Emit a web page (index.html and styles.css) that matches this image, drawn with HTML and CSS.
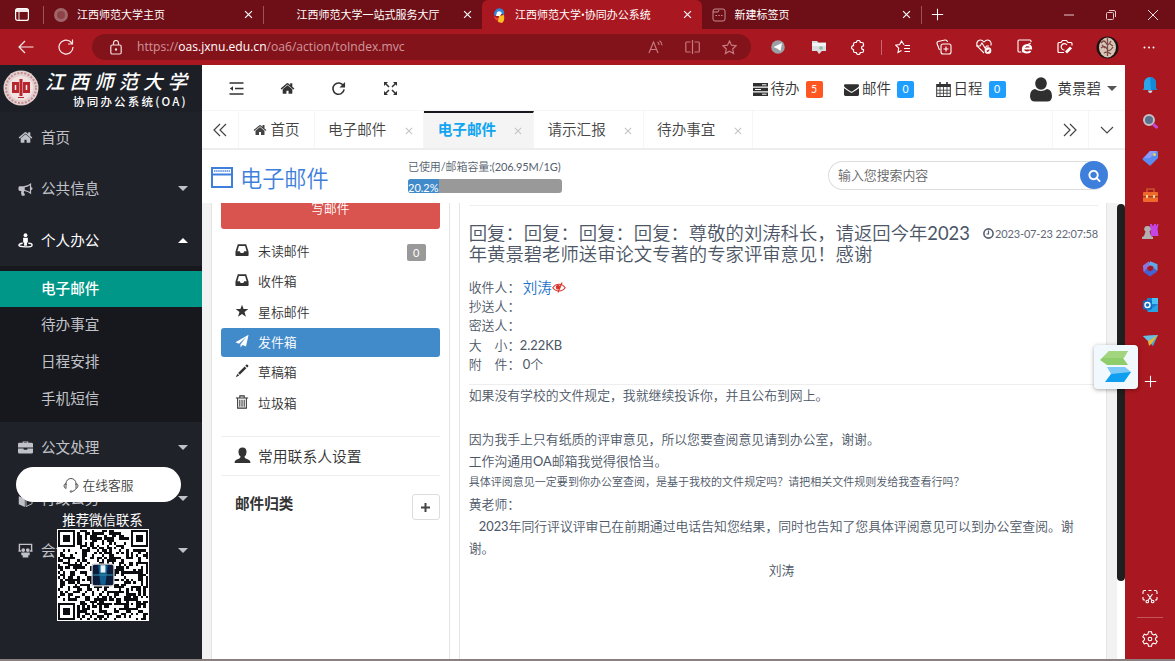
FILE: index.html
```html
<!DOCTYPE html>
<html lang="zh-CN">
<head>
<meta charset="utf-8">
<title>江西师范大学•协同办公系统</title>
<link rel="stylesheet" href="styles.css">
</head>
<body>
<svg class="sprite" aria-hidden="true">
  <symbol id="home" viewBox="0 0 1792 1792"><path d="M1472 992v480q0 26-19 45t-45 19h-384v-384h-256v384h-384q-26 0-45-19t-19-45v-480q0-1 .5-3t.5-3l575-474 575 474q1 2 1 6zm223-69l-62 74q-8 9-21 11h-3q-13 0-21-7l-692-577-692 577q-12 8-24 7-13-2-21-11l-62-74q-8-10-7-23.500t11-21.500l719-599q32-26 76-26t76 26l244 204v-195q0-14 9-23t23-9h192q14 0 23 9t9 23v408l219 182q10 8 11 21.500t-7 23.500z"/></symbol>
  <symbol id="repeat" viewBox="0 0 16 16"><path d="M13.300 5.200A6 6 0 1 0 14 9" fill="none" stroke="#333" stroke-width="1.700"/><path d="M15 1v6H9z"/></symbol>
  <symbol id="mail" viewBox="0 0 1792 1792"><path d="M1792 710v794q0 66-47 113t-113 47h-1472q-66 0-113-47t-47-113v-794q44 49 101 87 362 246 497 345 57 42 92.500 65.500t94.500 48 110 24.500h2q51 0 110-24.500t94.500-48 92.500-65.500q170-123 498-345 57-39 100-87zm0-294q0 79-49 151t-122 123q-376 261-468 325-10 7-42.500 30.500t-54 38-52 32.500-57.500 27-50 9h-2q-23 0-50-9t-57.500-27-52-32.500-54-38-42.500-30.500q-91-64-262-182.500t-205-142.500q-62-42-117-115.500t-55-136.500q0-78 41.500-130t118.500-52h1472q65 0 112.500 47t47.500 113z"/></symbol>
  <symbol id="search" viewBox="0 0 1792 1792"><path d="M1216 832q0-185-131.500-316.500t-316.500-131.500-316.500 131.500-131.500 316.500 131.500 316.500 316.500 131.500 316.500-131.500 131.500-316.500zm512 832q0 52-38 90t-90 38q-54 0-90-38l-343-342q-179 124-399 124-143 0-273.500-55.500t-225-150-150-225-55.500-273.500 55.500-273.500 150-225 225-150 273.500-55.500 273.500 55.500 225 150 150 225 55.500 273.500q0 220-124 399l343 343q37 37 37 90z"/></symbol>
  <symbol id="close" viewBox="0 0 16 16"><path d="M3 3l10 10M13 3L3 13" fill="none" stroke="currentColor" stroke-width="1.700"/></symbol>
  <symbol id="inbox" viewBox="0 0 16 16"><path fill-rule="evenodd" d="M3.200 1.500h9.600L15.500 10v4a.8.8 0 0 1-.8.8H1.300a.8.800 0 0 1-.8-.8v-4zM4.500 3.500L2.700 9.500h2.700l1.100 2h3l1.100-2h2.700l-1.800-6z"/></symbol>
  <symbol id="plus" viewBox="0 0 16 16"><path d="M8 1v14M1 8h14" fill="none" stroke="currentColor" stroke-width="1.300"/></symbol>
</svg>

<header class="tabstrip">
  <div class="strip-start"><svg width="14" height="13" viewBox="0 0 14 13"><rect x=".6" y=".6" width="12.800" height="11.800" rx="2" fill="none" stroke="#fff" stroke-width="1.200"/><path d="M1 1h12v3H4.500V12H3.500V4H1z" fill="#fff" opacity=".9"/></svg></div>
  <div class="btab sep-l"><svg class="fav" width="16" height="16" viewBox="0 0 16 16"><circle cx="8" cy="8" r="7" fill="#a0666a"/><circle cx="8" cy="8" r="4" fill="#8d4348"/></svg><span>江西师范大学主页</span><svg class="x"><use href="#close"/></svg></div>
  <div class="btab sep-l"><span class="no-icon">江西师范大学一站式服务大厅</span><svg class="x"><use href="#close"/></svg></div>
  <div class="btab current"><svg class="fav" width="15" height="16" viewBox="0 0 15 16"><path d="M3 4q2-4 7-2 3 2 2 6L8 6 3 9q-2-2 0-5z" fill="#2f86d8"/><path d="M5 5q3-2 5 1L8 9 4 9z" fill="#fff"/><path d="M2 8q1 3 5 3l1 3q-6 0-6-6z" fill="#e8433d"/><path d="M7 9l5-1q1 6-2 8l-4-1z" fill="#fdbe24"/></svg><span>江西师范大学<span class="dot">•</span>协同办公系统</span><svg class="x"><use href="#close"/></svg></div>
  <div class="btab"><svg class="fav" width="14" height="14" viewBox="0 0 14 14" fill="none" stroke="#c58b8f"><rect x="1" y="1" width="12" height="12" rx="2"/><path d="M1 4h5l1-2M3.500 7.500h1.500M6.300 7.500h1.500M9 7.500h1.500"/></svg><span class="newname">新建标签页</span><svg class="x"><use href="#close"/></svg></div>
  <div class="newtab sep-l"><svg width="13" height="13"><use href="#plus"/></svg></div>
  <div class="window-buttons">
    <span><svg width="10" height="10"><path d="M0 5h10" stroke="#e5c9cb"/></svg></span>
    <span><svg width="10" height="10" fill="none" stroke="#e5c9cb"><rect x=".5" y="2.500" width="7" height="7" rx="1"/><path d="M3 .5h5q1.500 0 1.500 1.500v5"/></svg></span>
    <span><svg width="10" height="10"><path d="M0 0l10 10M10 0L0 10" stroke="#f0dfe0"/></svg></span>
  </div>
</header>

<nav class="toolbar">
  <span class="tb-nav"><svg width="16" height="14" fill="none" stroke="#fbe9ea" stroke-width="1.200"><path d="M15.500 7H1M7 1L1 7l6 6"/></svg></span>
  <span class="tb-nav reload"><svg width="16" height="16" fill="none" stroke="#fbe9ea" stroke-width="1.200"><path d="M15 8A7 7 0 1 1 12.200 2.500L14.500 5M14.500.5V5H10"/></svg></span>
  <div class="address">
    <svg width="12" height="15" fill="none" stroke="#f4dcdd" stroke-width="1.200"><rect x=".8" y="5" width="10.400" height="9" rx="1.500"/><path d="M3.500 5V3a2.500 2.500 0 0 1 5 0v2"/><circle cx="6" cy="9.500" r=".6"/></svg>
    <span class="url">https://<b>oas.jxnu.edu.cn</b>/oa6/action/toIndex.mvc</span>
    <span class="addr-ic"><svg width="15" height="14" fill="none" stroke="#c5787d" stroke-width="1.200"><path d="M1 13L5.500 2 10 13M2.500 9.500h6M9.500 2q1.500 1 1.500 3M11.500.7q2.500 1.500 2.500 4.500"/></svg></span>
    <span class="addr-ic"><svg width="15" height="14" fill="none" stroke="#c5787d" stroke-width="1.200"><path d="M7.500 0v14M5.500 2H1.500Q.8 2 .8 3v8q0 1 .8 1h4M9.500 2h4q.8 0 .8 1v8q0 1-.8 1h-4"/></svg></span>
    <span class="addr-ic"><svg width="15" height="15" viewBox="0 0 15 15" fill="none" stroke="#c5787d" stroke-width="1.200"><path d="M7.500 1l2 4.200 4.600.6-3.400 3.200.9 4.600-4.100-2.300-4.100 2.300.9-4.600L.9 5.800l4.600-.6z"/></svg></span>
  </div>
  <div class="ext">
    <span><svg width="14" height="14"><circle cx="7" cy="7" r="6.800" fill="#9aa0a3"/><path d="M2.500 7L11 3 9.500 11 6.500 8.800z" fill="#fff"/></svg></span>
    <span><svg width="16" height="15"><path d="M1 1h5l1.500 1.500H15V11h-4l-3 3-2-3H1z" fill="#d9dde0"/><path d="M1 3h14v3H1z" fill="#f4f6f6"/><path d="M10 6v4M8 8h4" stroke="#7cae8a"/></svg></span>
    <span><svg width="15" height="15" fill="none" stroke="#fff" stroke-width="1.200"><path d="M4 2.500h1.300a2 2 0 0 1 4 0H11q1.500 0 1.500 1.500v1.800a1.900 1.900 0 0 0 0 3.800V11q0 1.500-1.500 1.500H9.300a2 2 0 0 1-4 0H4Q2.500 12.500 2.500 11V9.500a1.900 1.900 0 0 1 0-3.900V4Q2.500 2.500 4 2.500z"/></svg></span>
    <i></i>
    <span><svg width="16" height="14" fill="none" stroke="#fff" stroke-width="1.100"><path d="M9 4.800L6.500 1 4.700 4.600.8 5.200l2.900 2.900L3 12.400l3.500-1.900M9.500 5.500H15M9 8.500h6M9.500 11.500H15"/></svg></span>
    <span><svg width="16" height="16" fill="none" stroke="#fff" stroke-width="1.100"><rect x="5" y="5" width="10" height="10" rx="2"/><path d="M10 7.500v5M7.500 10h5M3.500 11L1 4.500Q.7 3 2 2.500L9 1q2-.3 2.500 2"/></svg></span>
    <span><svg width="16" height="16" fill="none" stroke="#fff" stroke-width="1.100"><path d="M8 14L2 8Q-.5 4.500 2 2q3-2.500 6 1 3-3.500 6-1 1.800 2 .8 4.500M0 7h4l2-3 3 5 1.500-2H13"/><circle cx="12" cy="11.500" r="2.800" fill="#fff"/><path d="M10.800 11.500l1 1 1.500-2" stroke="#a91720"/></svg></span>
    <span><svg width="16" height="16" fill="none" stroke="#fff" stroke-width="1.100"><path d="M4 13H2q-1 0-1-1V2q0-1 1-1h11q1 0 1 1v1"/><path d="M6.500 9.500H14Q14 6 10.500 6 6 6.500 6 10t4 3.500q2.500 0 3.500-1.500" stroke-width="2.200"/><path d="M5 13.500Q7 6 14 4" stroke-width="1"/></svg></span>
    <span><svg width="16" height="16" fill="none" stroke="#fff" stroke-width="1.200"><path d="M7 13.500H2q-1 0-1-1V4.500q0-1 1-1h2L5.500 1.500h4L11 3.500h3q1 0 1 1v2"/><path d="M10 6a3.200 3.200 0 1 0-2.500 5"/><path d="M9 13.500l5-5" stroke-width="2.800"/></svg></span>
    <span class="av"><svg width="23" height="23"><circle cx="11.500" cy="11.500" r="11" fill="#1c1213"/><ellipse cx="11.500" cy="11.500" rx="8.500" ry="10" fill="#d8c3b4"/><path d="M5 7q3-4 5 0t5-2M5 12q4-3 6 1t6-2M11.500 2v18M8 17q3-2 7 1M6 9l3 3M14 8l3 2" stroke="#7b4b48" fill="none" stroke-width="1.300"/></svg></span>
    <span><svg width="12" height="3" fill="#fff"><circle cx="1.500" cy="1.500" r="1"/><circle cx="6" cy="1.500" r="1"/><circle cx="10.500" cy="1.500" r="1"/></svg></span>
  </div>
</nav>

<div class="main">
  <aside class="side">
    <div class="brand">
      <svg width="36" height="36" viewBox="0 0 36 36"><circle cx="18" cy="18" r="17.500" fill="#e3d0d0"/><circle cx="18" cy="18" r="15" fill="none" stroke="#c48d8f" stroke-width="2" stroke-dasharray="2 1.500"/><circle cx="18" cy="18" r="12" fill="#f3e2e2"/><path d="M9 12h7v11H9zM20 12h7v11h-7zM16.500 9h3v17h-3z" fill="#b5262d"/><path d="M12.500 15v5M23.500 15v5" stroke="#f6ecec" stroke-width="1.500"/><path d="M15 27.500h6" stroke="#b5262d"/></svg>
      <div class="names"><div class="uni">江西师范大学</div><div class="sys">协同办公系统(OA)</div></div>
    </div>
    <div class="item"><svg class="ic"><use href="#home"/></svg>首页</div>
    <div class="item"><svg class="ic" viewBox="0 0 16 16"><path fill-rule="evenodd" d="M14 1v4.500a1.500 1.500 0 0 1 0 3V13Q10.500 10 6.500 9.600q-1 1.500.5 3 .8 1-.2 2H4Q2.700 12 3.500 9.500H2Q.5 9.500.5 8V6Q.5 4.500 2 4.500h4Q10 4.500 14 1zM12.700 3.500Q10 5.400 7.200 5.700v2.700q3 .4 5.500 2.200z"/></svg>公共信息<i class="down"></i></div>
    <div class="item on"><svg class="ic" viewBox="0 0 16 16"><circle cx="8" cy="2.300" r="2"/><path d="M5.500 5h5v5h-1v3.500h-3V10h-1z"/><path d="M5 11Q1 11.500 1 13t7 1.800 7-1.800-4-2" fill="none" stroke="currentColor" stroke-width="1.500"/></svg>个人办公<i class="down up"></i></div>
    <div class="sub"><div class="cur">电子邮件</div><div>待办事宜</div><div>日程安排</div><div>手机短信</div></div>
    <div class="item"><svg class="ic" viewBox="0 0 16 16"><path fill-rule="evenodd" d="M5 3V1.500h6V3h3.500Q16 3 16 4.500V8H0V4.500Q0 3 1.500 3zM6.200 3h3.600v-.5H6.200zM0 9h6v1.500h4V9h6v4q0 1.500-1.500 1.500h-13Q0 14.500 0 13z"/></svg>公文处理<i class="down"></i></div>
    <div class="item"><svg class="ic" viewBox="0 0 16 16"><path d="M8 0l7 3-7 3-7-3zM.8 4.500L7.300 7v9L.8 13z"/><path d="M15 4.500L8.500 7v8.500l6.500-3z" fill="none" stroke="currentColor"/></svg>行政公务<i class="down"></i></div>
    <div class="item"><svg class="ic" viewBox="0 0 16 16"><path d="M1.500 8V1.500h13V8M.5 8.500h3M12.500 8.500h3" fill="none" stroke="currentColor" stroke-width="1.500"/><circle cx="5.600" cy="7.500" r="2"/><circle cx="10.400" cy="7.500" r="2"/><path d="M3.500 10h9v3h-1.500v2.500H5V13H3.500z"/></svg>会议安排<i class="down"></i></div>
    <div class="service">
      <div class="pill"><svg width="16" height="16" fill="none" stroke="#555"><path d="M3 8V6.500a5 5 0 0 1 10 0V8M3 6.500Q.8 7 1 9t2 2.500zM13 6.500q2.200.5 2 2.500t-2 2.500zM13 11.500Q12 14 9 14.500"/><circle cx="8" cy="14.500" r=".8"/></svg>在线客服</div>
      <div class="wx">推荐微信联系</div>
      <svg id="qr" width="92" height="92" viewBox="-.4 -.4 37.800 37.800"></svg>
    </div>
  </aside>

  <section class="app">
    <div class="topbar">
      <div class="tools">
        <svg width="15" height="13" viewBox="0 0 15 13" fill="none" stroke="#333" stroke-width="1.500"><path d="M.5 1h14M6 6.500h8.500M.5 12h14"/><path d="M4 4.300v4.400L.8 6.500z" fill="#333" stroke="none"/></svg>
        <svg width="15" height="15"><use href="#home"/></svg>
        <svg width="15" height="15"><use href="#repeat"/></svg>
        <svg class="full" width="13" height="13" viewBox="0 0 13 13"><path d="M0 0h4L0 4zM13 0v4L9 0zM0 13V9l4 4zM13 13H9l4-4z"/><path d="M1.500 1.500L5 5M11.500 1.500L8 5M1.500 11.500L5 8M11.500 11.500L8 8" stroke="#333" stroke-width="1.500"/></svg>
      </div>
      <div class="status">
        <span class="st s1"><svg width="15" height="13" viewBox="0 0 15 13"><path d="M0 0h15v3.600H0zM0 4.700h15v3.600H0zM0 9.400h15V13H0z"/><path d="M9 1.800h4.500M2 6.500h6M9 11.200h4.500" stroke="#fff" stroke-width="1"/></svg>待办<b class="hot">5</b></span>
        <span class="st s2"><svg width="15" height="15"><use href="#mail"/></svg>邮件<b>0</b></span>
        <span class="st s3"><svg width="15" height="15" viewBox="0 0 15 15" fill="none" stroke="#333"><rect x=".7" y="2.500" width="13.600" height="12" fill="#fff"/><path d="M.7 4h13.600" stroke-width="2"/><path d="M4 0v4M11 0v4" stroke-width="1.600"/><path d="M4 5v9M7.500 5v9M11 5v9M1 8.200h13M1 11.300h13" stroke-width=".8"/></svg>日程<b>0</b></span>
        <span class="st s4"><svg width="22" height="25" viewBox="0 0 22 25"><ellipse cx="11" cy="6.500" rx="5.800" ry="6.200"/><path d="M5 12q6 4 12 0 5 1 5 7 0 5.500-5 5.500H5q-5 0-5-5.500 0-6 5-7z"/></svg><em>黄景碧</em><i class="down"></i></span>
      </div>
    </div>
    <div class="pagetabs">
      <div class="arr"><svg width="14" height="14" fill="none" stroke="#444" stroke-width="1.200"><path d="M7 1L1 7l6 6M13 1L7 7l6 6"/></svg></div>
      <div class="t home"><svg width="14" height="14"><use href="#home"/></svg>首页</div>
      <div class="t">电子邮件<svg class="tx"><use href="#close"/></svg></div>
      <div class="t active">电子邮件<svg class="tx"><use href="#close"/></svg></div>
      <div class="t">请示汇报<svg class="tx"><use href="#close"/></svg></div>
      <div class="t">待办事宜<svg class="tx"><use href="#close"/></svg></div>
      <div class="arr right"><svg width="14" height="14" fill="none" stroke="#444" stroke-width="1.200"><path d="M1 1l6 6-6 6M7 1l6 6-6 6"/></svg></div>
      <div class="arr"><svg width="14" height="8" fill="none" stroke="#444" stroke-width="1.100"><path d="M1 1l6 6 6-6"/></svg></div>
    </div>
    <div class="mailhead">
      <svg width="22" height="21" viewBox="0 0 22 21" fill="none" stroke="#3f7fdc" stroke-width="2"><rect x="1" y="1" width="20" height="19"/><path d="M1 7.500h20"/><path d="M3 4h16" stroke-width="2" stroke-dasharray="1.500 .6" opacity=".7"/></svg>
      <h1>电子邮件</h1>
      <div class="quota"><div class="q-text">已使用<span class="lat">/</span>邮箱容量<span class="lat">:(206.95M/1G)</span></div><div class="bar"><div class="fill" style="width:20.2%">20.2%</div></div></div>
      <div class="searchbox"><span>输入您搜索内容</span><button><svg width="13" height="13"><use href="#search"/></svg></button></div>
    </div>
    <div class="work">
      <div class="folders">
        <div class="compose">写邮件</div>
        <ul>
          <li><svg><use href="#inbox"/></svg>未读邮件<b>0</b></li>
          <li><svg><use href="#inbox"/></svg>收件箱</li>
          <li><svg viewBox="0 0 16 16"><path d="M8 .8l1.800 5h5.400l-4.300 3.300 1.600 5.400L8 11.300l-4.500 3.200 1.600-5.400L.8 5.800h5.400z"/></svg>星标邮件</li>
          <li class="sel"><svg viewBox="0 0 16 16"><path d="M15.500.8L.5 9.300l4 1.800 8.500-7.600-6.700 8.300v3.500l2.300-2.600 4 1.600z"/></svg>发件箱</li>
          <li><svg viewBox="0 0 16 16"><path d="M12.800.8q1-.8 2 .2t.2 2L13.800 4 11.800 2zM11 2.800L13 4.800 5.500 12.300 3.500 10.300zM2.800 11L4.800 13 .8 15.200z"/></svg>草稿箱</li>
          <li><svg class="line" viewBox="0 0 16 16"><path d="M1 3.500h14M5.500 3V1h5v2M3 4v11h10V4M5.500 5.500v8M8 5.500v8M10.500 5.500v8"/></svg>垃圾箱</li>
        </ul>
        <div class="contacts"><svg viewBox="0 0 16 16" width="17" height="17"><path d="M8 .5q4 0 3.800 4.500-.2 3-2 4.200.2 1.300 1.700 1.800Q15.500 12 15.500 15H.5q0-3 4-4 1.500-.5 1.700-1.800Q4.400 8 4.200 5 4 .5 8 .5z"/></svg>常用联系人设置</div>
        <div class="cats"><strong>邮件归类</strong><span class="add"><svg width="9" height="9" viewBox="0 0 9 9"><path d="M4.500 0v9M0 4.500h9" stroke="#444" stroke-width="2"/></svg></span></div>
      </div>
      <article class="mail">
        <div class="m-head">
          <h2>回复：回复：回复：回复：尊敬的刘涛科长，请返回今年<span class="lat">2023</span><br>年黄景碧老师送审论文专著的专家评审意见！感谢</h2>
          <time><svg width="11" height="11" viewBox="0 0 11 11" fill="none" stroke="#555f6e" stroke-width="1.600"><circle cx="5.500" cy="5.500" r="4.600"/><path d="M5.500 2.500v3.500H3.500" stroke-width="1.200"/></svg>2023-07-23 22:07:58</time>
        </div>
        <dl>
          <div><dt>收件人：</dt><dd class="who">刘涛<svg width="14" height="11" viewBox="0 0 14 11" fill="none" stroke="#d9342b" stroke-width="1.100"><path d="M.8 5.800Q3 2.200 7 2.200t6.200 3.600Q11 9 7 9T.8 5.800z"/><circle cx="6" cy="5.300" r="1.700" fill="#d9342b"/><path d="M10 .5L6 10.500"/></svg></dd></div>
          <div><dt>抄送人：</dt></div>
          <div><dt>密送人：</dt></div>
          <div><dt>大　小：</dt><dd class="lat">2.22KB</dd></div>
          <div><dt>附　件：</dt><dd class="n"><span class="lat">0</span>个</dd></div>
        </dl>
        <div class="content">
          <p>如果没有学校的文件规定，我就继续投诉你，并且公布到网上。</p>
          <p>&nbsp;</p>
          <p>因为我手上只有纸质的评审意见，所以您要查阅意见请到办公室，谢谢。</p>
          <p>工作沟通用<span class="lat">OA</span>邮箱我觉得很恰当。</p>
          <p class="small">具体评阅意见一定要到你办公室查阅，是基于我校的文件规定吗？请把相关文件规则发给我查看行吗？</p>
          <p>黄老师：</p>
          <p class="ind"><span class="lat">2023</span>年同行评议评审已在前期通过电话告知您结果，同时也告知了您具体评阅意见可以到办公室查阅。谢</p>
          <p>谢。</p>
          <p class="sign">刘涛</p>
        </div>
      </article>
      <div class="scroll"><div class="thumb"></div></div>
    </div>
  </section>

  <aside class="edge">
    <span><svg width="16" height="18"><path d="M2 12V7a6 6 0 0 1 12 0v5l1 2H1z" fill="#2aa5ea"/><path d="M8 1a6 6 0 0 1 6 6v5l1 2H9z" fill="#1688d8"/><path d="M6 14.500h4.500q-.5 2.500-2.300 2.500T6 14.500z" fill="#bfe2f5"/></svg></span>
    <span><svg width="17" height="17" fill="none"><circle cx="7" cy="7" r="5" fill="#5b6f8f" stroke="#c6c0c4" stroke-width="2"/><path d="M11 11l4.500 4" stroke="#c04bd5" stroke-width="3"/></svg></span>
    <span><svg width="17" height="16"><path d="M8 1h7q1 0 1 1v6l-7 7q-1 1-2 0L1 10q-1-1 0-2z" fill="#5a8bf0"/><path d="M8 1h7l-7 7-6 0z" fill="#8c9bf5"/><circle cx="12.500" cy="4.500" r="1.500" fill="#e7d94a"/></svg></span>
    <span><svg width="17" height="15"><path d="M5 4V1h7v3" fill="none" stroke="#c8562a" stroke-width="1.600"/><rect x="1" y="4" width="15" height="10" rx="1" fill="#ee6a2c"/><path d="M1 8h15v1.500H1z" fill="#a73e1c"/><path d="M4 7h2v3H4zM11 7h2v3h-2z" fill="#f6cf9a"/></svg></span>
    <span><svg width="18" height="17"><path d="M9 1h2v1.500h2V1h2v1.500h1V1h1.500l-1 5 1 7H10z" fill="#c445e6"/><path d="M6.500 3a3 3 0 0 1 2 5.500L10 13l2 1v2H1v-2l2-1 1.500-4.500A3 3 0 0 1 6.500 3z" fill="#b3b0b0"/></svg></span>
    <span><svg width="17" height="17" fill="none" stroke-width="4"><path d="M3.500 11.500L3 6.500 8 3" stroke="#8a74dd"/><path d="M7.500 3l6 2.500v5" stroke="#5fa9ea"/><path d="M3 10.500l5 3.500 6-4" stroke="#4561d3"/></svg></span>
    <span><svg width="17" height="16"><path d="M5 1h11v13H5z" fill="#1c7fd0"/><path d="M10 1h6v6h-6z" fill="#4bc1f4"/><path d="M16 7v8H5z" fill="#2aa3e5"/><rect x="1" y="3.500" width="9" height="9" rx="1" fill="#0f6fc4"/><circle cx="5.500" cy="8" r="2.500" fill="none" stroke="#fff" stroke-width="1.400"/></svg></span>
    <span><svg width="17" height="14"><path d="M1 2l15-1-5 11z" fill="#48a7d8"/><path d="M16 1L6 7l1 5 3-3z" fill="#e5b83a"/><path d="M1 2l15-1L6 7z" fill="#6abfe0"/></svg></span>
    <span class="pl"><svg width="13" height="13"><use href="#plus"/></svg></span>
    <span class="snip"><svg width="16" height="15" fill="none" stroke="#fff" stroke-width="1.100"><path d="M3 11H2q-1 0-1-1V8M1 5V3q0-1.500 1.500-1.500H4M6.500 1.500h3M12 1.500h1.500Q15 1.500 15 3v2M15 8v2q0 1-1 1h-1M5.500 5l4.500 6.500M10.500 5L6 11.500"/><circle cx="5.300" cy="12.500" r="1.300"/><circle cx="10.700" cy="12.500" r="1.300"/></svg></span>
    <span class="gear"><svg width="16" height="16" viewBox="0 0 16 16" fill="none" stroke="#fff" stroke-width="1.100"><path d="M6.500.8h3l.5 2.200 1.500.9 2.200-.7 1.500 2.600-1.700 1.500v1.500l1.700 1.500-1.500 2.600-2.200-.7-1.500.9-.5 2.200h-3L6 13.100l-1.500-.9-2.200.7L.8 10.300l1.700-1.500V7.300L.8 5.800l1.500-2.600 2.200.7L6 3z"/><circle cx="8" cy="8" r="1.800"/></svg></span>
  </aside>
</div>
<div class="floater"><svg width="34" height="32" viewBox="0 0 34 32"><path d="M10 0h19l-5 7 5 7H8L1 9z" fill="#8fcc6a"/><path d="M10 0h19l-4 7H4z" fill="#a3d57f"/><path d="M8 16h18l6 5-3 2H12z" fill="#7cc8f7"/><path d="M12 23l20-2-7 10H6z" fill="#0e9ff0"/></svg></div>
<script src="qr.js"></script>
</body>
</html>
```
FILE: styles.css
```css
* { box-sizing: border-box; }
body {
  margin: 0; width: 1175px; height: 661px; overflow: hidden; position: relative;
  display: flex; flex-direction: column; background: #a91720;
  font-family: Lato, "Noto Sans CJK SC", sans-serif; font-weight: 350; font-size: 14.600px;
  border-bottom: 2px solid #8b8080;
}
svg { flex: none; }
.sprite { display: none; }
i, em { font-style: normal; }
.lat { font-weight: 400; }

/* browser tab strip */
.tabstrip { height: 29px; flex: none; display: flex; align-items: center; background: #6e0e16; color: #fff; }
.strip-start { width: 43px; padding-left: 15px; display: flex; }
.btab { width: 219.500px; height: 29px; display: flex; align-items: center; font: 400 11px/29px "Noto Sans CJK SC", sans-serif; padding: 0 9px 0 10px; white-space: nowrap; }
.sep-l { background: linear-gradient(#98545a, #98545a) 0 50% / 1px 18px no-repeat; }
.btab .fav { margin-right: 8px; }
.btab .dot { font-family: "Open Sans", sans-serif; font-size: 10px; }
.btab .newname { padding-left: 1px; }
.no-icon { padding-left: 24px; }
.btab .x { width: 11px; height: 11px; margin-left: auto; }
.btab.current { background: #a91720; border-radius: 6px 6px 0 0; }
.newtab { padding-left: 10px; height: 29px; display: flex; align-items: center; width: 127px; }
.window-buttons { display: flex; }
.window-buttons span { width: 42px; display: flex; justify-content: center; }

/* browser toolbar */
.toolbar { height: 36px; flex: none; display: flex; align-items: center; }
.tb-nav { width: 41px; padding-left: 18px; display: flex; }
.tb-nav.reload { width: 51px; padding-left: 17px; }
.address { width: 659px; height: 26px; border-radius: 13px; background: #83131b; display: flex; align-items: center; padding-left: 18px; padding-right: 3px; margin-right: 7px; }
.url { margin-left: 15px; margin-right: auto; font: 400 12.100px/26px "Open Sans", sans-serif; color: #d0979b; white-space: nowrap; }
.url b { font-weight: 400; color: #fff; }
.addr-ic { width: 37px; display: flex; justify-content: center; }
.ext { display: flex; align-items: center; color: #fff; }
.ext span { width: 40.400px; display: flex; justify-content: center; }
.ext i { width: 1px; height: 15px; background: #c8686e; margin: 0 1.500px; }
.ext .av { width: 44px; }

.main { display: flex; height: 594px; flex: none; }

/* left menu */
.side { width: 202px; background: #20222a; color: #c0c2c8; position: relative; height: 594px; font-weight: 400; }
.brand { height: 46.500px; display: flex; padding: 5px 0 0 3px; color: #fff; background: #1d1f27; }
.names { display: flex; flex-direction: column; gap: 2px; }
.uni { font: italic 500 19.500px/22px "Noto Sans CJK SC", sans-serif; letter-spacing: 5px; padding-left: 6px; white-space: nowrap; height: 22px; }
.sys { font: 500 11.500px/15px "Noto Sans CJK SC", sans-serif; letter-spacing: 2.200px; padding-left: 34px; white-space: nowrap; }
.item { height: 51.500px; display: flex; align-items: center; padding: 0 14px 2px 18px; }
.ic { width: 15px; height: 15px; fill: currentColor; margin-right: 8px; margin-top: 3px; }
.item .down { margin-left: auto; margin-top: 2px; }
.item.on { color: #fff; }
.down { border: 5.500px solid transparent; border-top: 5.500px solid currentColor; border-bottom: 0; }
.down.up { border-top: 0; border-bottom: 5.500px solid currentColor; }
.sub { height: 155.500px; padding-top: 4.500px; background: #16181d; }
.sub div { height: 36.800px; line-height: 36.400px; padding-left: 41px; }
.sub .cur { background: #009688; color: #fff; font-weight: 500; }
.service { position: absolute; left: 16px; top: 402px; width: 165px; display: flex; flex-direction: column; align-items: center; }
.pill { width: 165px; height: 35px; border-radius: 18px; background: #fff; color: #444; font-size: 12.800px; font-weight: 350; display: flex; align-items: center; justify-content: center; gap: 3px; }
.wx { color: #fff; font-size: 13.400px; line-height: 19px; margin: 9px 0 0 8px; height: 19px; }
#qr { margin: -1px 0 0 9px; }

/* application header */
.app { width: 923px; background: #fff; color: #333; display: flex; flex-direction: column; }
.topbar { height: 46px; display: flex; align-items: center; padding-top: 2px; border-bottom: 1px solid #f6f6f6; }
.tools { display: flex; align-items: center; padding-left: 27px; }
.tools svg { margin-right: 36px; fill: #333; }
.tools .full { margin-left: 2px; }
.status { display: flex; margin-left: auto; align-items: center; font-size: 14.500px; line-height: 20px; }
.st { display: flex; align-items: center; fill: #2f2f2f; white-space: nowrap; }
.st svg { margin-right: 3px; margin-top: 1px; }
.st b { margin: 1px 0 0 6px; width: 17px; height: 17px; line-height: 17px; font-size: 10.500px; font-weight: 400; text-align: center; color: #fff; background: #1e9fff; border-radius: 2px; }
.st .hot { background: #ff5722; }
.s1, .s2 { margin-right: 21.500px; }
.s3 { margin-right: 24px; }
.s4 { margin-right: 8px; }
.s4 svg { margin-right: 6px; }
.s4 .down { color: #555; margin-left: 6px; }
.pagetabs { height: 39px; display: flex; border-bottom: 2px solid #ededed; color: #444; }
.arr { width: 36.500px; display: flex; align-items: center; justify-content: center; border-right: 1px solid #f6f6f6; }
.arr:last-child { border: 0; }
.arr.right { margin-left: auto; border-left: 1px solid #f6f6f6; }
.t { width: 109.700px; display: flex; align-items: center; padding: 0 9.500px 2px 13.500px; border-right: 1px solid #f6f6f6; white-space: nowrap; }
.t.home { width: 76px; gap: 4px; fill: #444; padding-left: 14px; }
.t.home svg { margin-top: 2px; }
.tx { width: 10px; height: 10px; color: #c4c4c4; margin-left: auto; margin-top: 4px; }
.t.active { background: #f4f4f4; border-top: 2px solid #16181d; color: #0fa5f0; font-weight: 700; padding-bottom: 4px; }
.mailhead { height: 53px; display: flex; padding-left: 9px; }
.mailhead > svg { margin-top: 17px; }
.mailhead h1 { margin: 12px 0 0 7px; width: 168px; font: 350 22.200px/30px "Noto Sans CJK SC", sans-serif; color: #3f7fdc; }
.quota { width: 154px; padding-top: 10px; }
.q-text { font-size: 11px; line-height: 14px; color: #555f6e; white-space: nowrap; letter-spacing: -.1px; }
.bar { margin-top: 5px; height: 14px; background: #999; border-radius: 3px; overflow: hidden; }
.fill { height: 14px; background: #428bca; color: #fff; font-size: 11px; line-height: 17px; font-weight: 400; }
.searchbox { margin: 11px 17px 0 auto; width: 280px; height: 29px; border: 1px solid #ddd; border-right: 0; border-radius: 15px; display: flex; justify-content: space-between; align-items: center; padding-left: 9px; font-size: 12.900px; color: #666; }
.searchbox span { margin-top: -3px; }
.searchbox button { width: 28px; height: 28px; margin-top: -1px; border: 0; padding: 0; border-radius: 50%; background: #3f7fdc; fill: #fff; display: flex; align-items: center; justify-content: center; }

/* mailbox */
.work { flex: 1; display: flex; overflow: hidden; border-left: 9px solid #f2f2f2; }
.folders { width: 239px; margin-right: 9px; border: solid #e4e4e4; border-width: 0 1px; padding: 0 9px; color: #333; }
.compose { height: 26px; background: #d9534f; color: #fff; border-radius: 0 0 3px 3px; text-align: center; font-size: 12.800px; line-height: 11px; overflow: hidden; }
.folders ul { list-style: none; margin: 8px 0 0; padding: 0; }
.folders li { height: 28.500px; margin-bottom: 1.850px; display: flex; align-items: center; padding: 0 14px 1.500px 14px; font-size: 12.900px; border-radius: 3px; }
.folders li svg { width: 14px; height: 14px; margin-right: 9px; margin-top: -1px; fill: #333; }
.folders li .line { fill: none; stroke: #333; stroke-width: 1.200; }
.folders li.sel { background: #428bca; color: #fff; }
.folders li.sel svg { fill: #fff; }
.folders li b { margin-left: auto; margin-top: 3px; width: 19px; height: 17px; line-height: 17px; background: #999; color: #fff; text-align: center; font-size: 11px; font-weight: 400; border-radius: 2px; }
.contacts { margin-top: 19px; height: 40px; border: solid #eee; border-width: 1px 0; display: flex; align-items: center; gap: 7px; padding: 0 0 2px 13px; fill: #333; font-size: 14.800px; }
.cats { display: flex; justify-content: space-between; padding-left: 14px; margin-top: 18px; }
.cats strong { font-size: 14.600px; line-height: 19px; font-weight: 700; }
.add { width: 28px; height: 26px; border: 1px solid #ddd; border-radius: 3px; display: flex; align-items: center; justify-content: center; }
.mail { width: 649px; border: solid #e4e4e4; border-width: 0 1px; padding: 2px 8px 0 9px; color: #4c5666; }
.m-head { display: flex; justify-content: space-between; border-top: 1px solid #eee; padding-top: 17px; height: 72.500px; }
.mail h2 { margin: 0; font-weight: 350; font-size: 18.350px; line-height: 20.500px; white-space: nowrap; }
time { display: flex; align-items: center; gap: 1px; height: 20px; font-size: 11px; font-weight: 400; white-space: nowrap; letter-spacing: -.15px; color: #5f6876; }
dl { margin: 0; height: 107.500px; border-bottom: 1px solid #eee; font-size: 12.900px; }
dl > div { height: 19.400px; display: flex; line-height: 19.400px; }
dt { width: 51px; white-space: nowrap; }
dd { margin: 0; }
dd.who { color: #1a73c8; font-size: 14.600px; padding-left: 3px; display: flex; align-items: center; }
dd.n { padding-left: 3px; }
.content { font-size: 12.850px; margin-top: -1px; }
.content p { margin: 0; height: 21.870px; line-height: 22.300px; white-space: nowrap; }
.content .small { font-size: 11.020px; }
.content .ind { padding-left: 10px; }
.content .sign { padding-left: 300px; }
.scroll { width: 18px; background: #fff; border-left: 10px solid #f2f2f2; padding-top: 1px; }
.thumb { width: 8px; height: 377px; border-radius: 4px; background: #1f1f1f; }

/* browser side rail */
.edge { width: 50px; padding-top: 2px; display: flex; flex-direction: column; color: #fff; }
.edge span { height: 36.600px; display: flex; align-items: center; justify-content: center; }
.edge .pl { height: 44px; }
.edge .snip { margin-top: auto; height: 42px; margin-left: 12px; margin-right: 12px; border-bottom: 1px solid #c4535a; }
.edge .gear { height: 41px; }

.floater { position: absolute; left: 1094px; top: 345px; width: 44px; height: 44px; background: #f1f9fe; border-radius: 4px; box-shadow: 0 1px 4px rgba(0,0,0,.35); display: flex; align-items: center; justify-content: center; }
```
FILE: qr.js
```js
// Draws the contact QR code as a 37x37 module grid.
(function () {
  var n = 37, seed = 20230723, d = '', marks = [[0, 0], [n - 7, 0], [0, n - 7]];
  function rnd() { seed = (seed * 1103515245 + 12345) % 2147483648; return seed / 2147483648; }
  function cell(x, y) {
    for (var i = 0; i < 3; i++) {
      var a = x - marks[i][0], b = y - marks[i][1];
      if (a >= -1 && a <= 7 && b >= -1 && b <= 7) {
        if (a < 0 || b < 0 || a > 6 || b > 6) return false;
        return a === 0 || b === 0 || a === 6 || b === 6 || (a > 1 && a < 5 && b > 1 && b < 5);
      }
    }
    var r = Math.max(Math.abs(x - 30), Math.abs(y - 30));
    if (r < 3) return r !== 1;
    return rnd() < 0.5;
  }
  for (var y = 0; y < n; y++) for (var x = 0; x < n; x++) if (cell(x, y)) d += 'M' + x + ' ' + y + 'h1v1h-1z';
  document.getElementById('qr').innerHTML =
    '<rect x="-1" y="-1" width="40" height="40" fill="#fff"/><path d="' + d + '" fill="#0c0d10" shape-rendering="crispEdges"/>' +
    '<rect x="14" y="14" width="9" height="9" rx="1" fill="#0c1c3c" stroke="#d8d8d8" stroke-width=".5"/>' +
    '<path d="M16.500 14.500h4l-1 8h-2z" fill="#12608f"/><path d="M17.500 14.500h2v3h-2z" fill="#e8f6ff"/><path d="M14.500 18.500h8" stroke="#2c86a5" stroke-width=".5"/>';
})();
```
